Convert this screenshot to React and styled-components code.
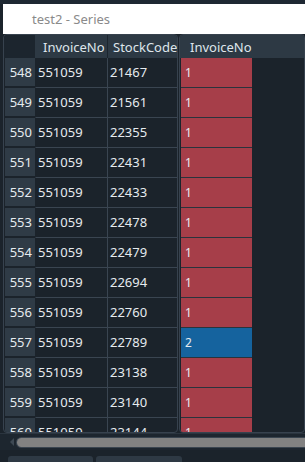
import React from 'react';
import styled, { createGlobalStyle } from 'styled-components';

const rows = [
  [548, '551059', '21467', 1],
  [549, '551059', '21561', 1],
  [550, '551059', '22355', 1],
  [551, '551059', '22431', 1],
  [552, '551059', '22433', 1],
  [553, '551059', '22478', 1],
  [554, '551059', '22479', 1],
  [555, '551059', '22694', 1],
  [556, '551059', '22760', 1],
  [557, '551059', '22789', 2],
  [558, '551059', '23138', 1],
  [559, '551059', '23140', 1],
  [560, '551059', '23144', 1],
];

const GlobalStyle = createGlobalStyle`
  body {
    margin: 0;
    background: #1b232b;
    font-family: "Noto Sans", "Open Sans", sans-serif;
    overflow: hidden;
  }
`;

const Window = styled.div`
  width: 305px;
  height: 462px;
  display: flex;
  flex-direction: column;
  background: #1b232b;
  color: #e6ebef;
  overflow: hidden;
`;

const TopStrip = styled.div`
  height: 4px;
  background: #1e2832;
`;

const TitleBar = styled.div`
  height: 30px;
  margin-left: 3px;
  background: #ffffff;
  display: flex;
  align-items: center;
  padding-left: 29px;
  font-size: 13px;
  color: #8a8a8a;
`;

const Body = styled.div`
  display: flex;
  height: 399px;
  padding-left: 3px;
  gap: 1px;
`;

const Pane = styled.div`
  width: ${p => p.width}px;
  flex: ${p => (p.width ? 'none' : '1')};
  border: 1px solid #37424e;
  border-radius: 4px;
  overflow: hidden;
  display: flex;
  flex-direction: column;
`;

const HeaderRow = styled.div`
  display: grid;
  grid-template-columns: ${p => p.cols};
  height: 23px;
  flex: none;
`;

const Corner = styled.div`
  background: #1c252e;
`;

const HeadCell = styled.div`
  background: #2d3944;
  border-left: 1px solid ${p => (p.first ? 'transparent' : '#1c252e')};
  font-size: 13px;
  color: #dfe6ec;
  display: flex;
  align-items: center;
  padding-left: ${p => p.pad || 8}px;
  white-space: nowrap;
  overflow: hidden;
`;

const DataRow = styled.div`
  display: grid;
  grid-template-columns: ${p => p.cols};
  height: 30px;
  flex: none;
`;

const RowNum = styled.div`
  background: #2f3b46;
  margin: 0 0 2px 1px;
  font-size: 13px;
  display: flex;
  align-items: center;
  justify-content: flex-end;
  padding-right: 3px;
`;

const Cell = styled.div`
  border-bottom: 1px solid #3a4551;
  border-left: 1px solid ${p => (p.first ? 'transparent' : '#3a4551')};
  font-size: 13px;
  display: flex;
  align-items: center;
  padding-left: 2px;
  padding-bottom: 1px;
`;

const ValueCell = styled.div`
  background: ${p => (p.highlight ? '#15639e' : '#a63e49')};
  border-bottom: 1px solid #2a333d;
  margin-left: 1px;
  font-size: 12px;
  display: flex;
  align-items: center;
  padding-left: 4px;
  padding-bottom: 1px;
`;

const ScrollArea = styled.div`
  height: 16px;
  display: flex;
  align-items: center;
  padding-left: 10px;
  gap: 3px;
  background: #1d262f;
  border-top: 1px solid #2b353f;
`;

const Arrow = styled.div`
  width: 0;
  height: 0;
  border-top: 4px solid transparent;
  border-bottom: 4px solid transparent;
  border-right: 4px solid #3d4853;
`;

const Thumb = styled.div`
  flex: 1;
  height: 9px;
  background: #828282;
  border-radius: 5px 0 0 5px;
  box-shadow: 0 0 0 1px #3a4550;
`;

const TabBar = styled.div`
  flex: 1;
  display: flex;
  align-items: flex-end;
  gap: 3px;
  padding-left: 8px;
`;

const Tab = styled.div`
  width: ${p => p.width}px;
  height: 6px;
  background: #2e3944;
  border-radius: 3px 3px 0 0;
`;

const leftCols = '31px 72px 1fr';
const rightCols = '72px 1fr';

export default function App() {
  return (
    <Window>
      <GlobalStyle />
      <TopStrip />
      <TitleBar>test2 - Series</TitleBar>
      <Body>
        <Pane width={173}>
          <HeaderRow cols={leftCols}>
            <Corner />
            <HeadCell first pad={7}>InvoiceNo</HeadCell>
            <HeadCell pad={5}>StockCode</HeadCell>
          </HeaderRow>
          {rows.map(r => (
            <DataRow key={r[0]} cols={leftCols}>
              <RowNum>{r[0]}</RowNum>
              <Cell first>{r[1]}</Cell>
              <Cell>{r[2]}</Cell>
            </DataRow>
          ))}
        </Pane>
        <Pane>
          <HeaderRow cols="1fr">
            <HeadCell first pad={9}>InvoiceNo</HeadCell>
          </HeaderRow>
          {rows.map(r => (
            <DataRow key={r[0]} cols={rightCols}>
              <ValueCell highlight={r[3] === 2}>{r[3]}</ValueCell>
              <div />
            </DataRow>
          ))}
        </Pane>
      </Body>
      <ScrollArea>
        <Arrow />
        <Thumb />
      </ScrollArea>
      <TabBar>
        <Tab width={85} />
        <Tab width={86} />
      </TabBar>
    </Window>
  );
}
